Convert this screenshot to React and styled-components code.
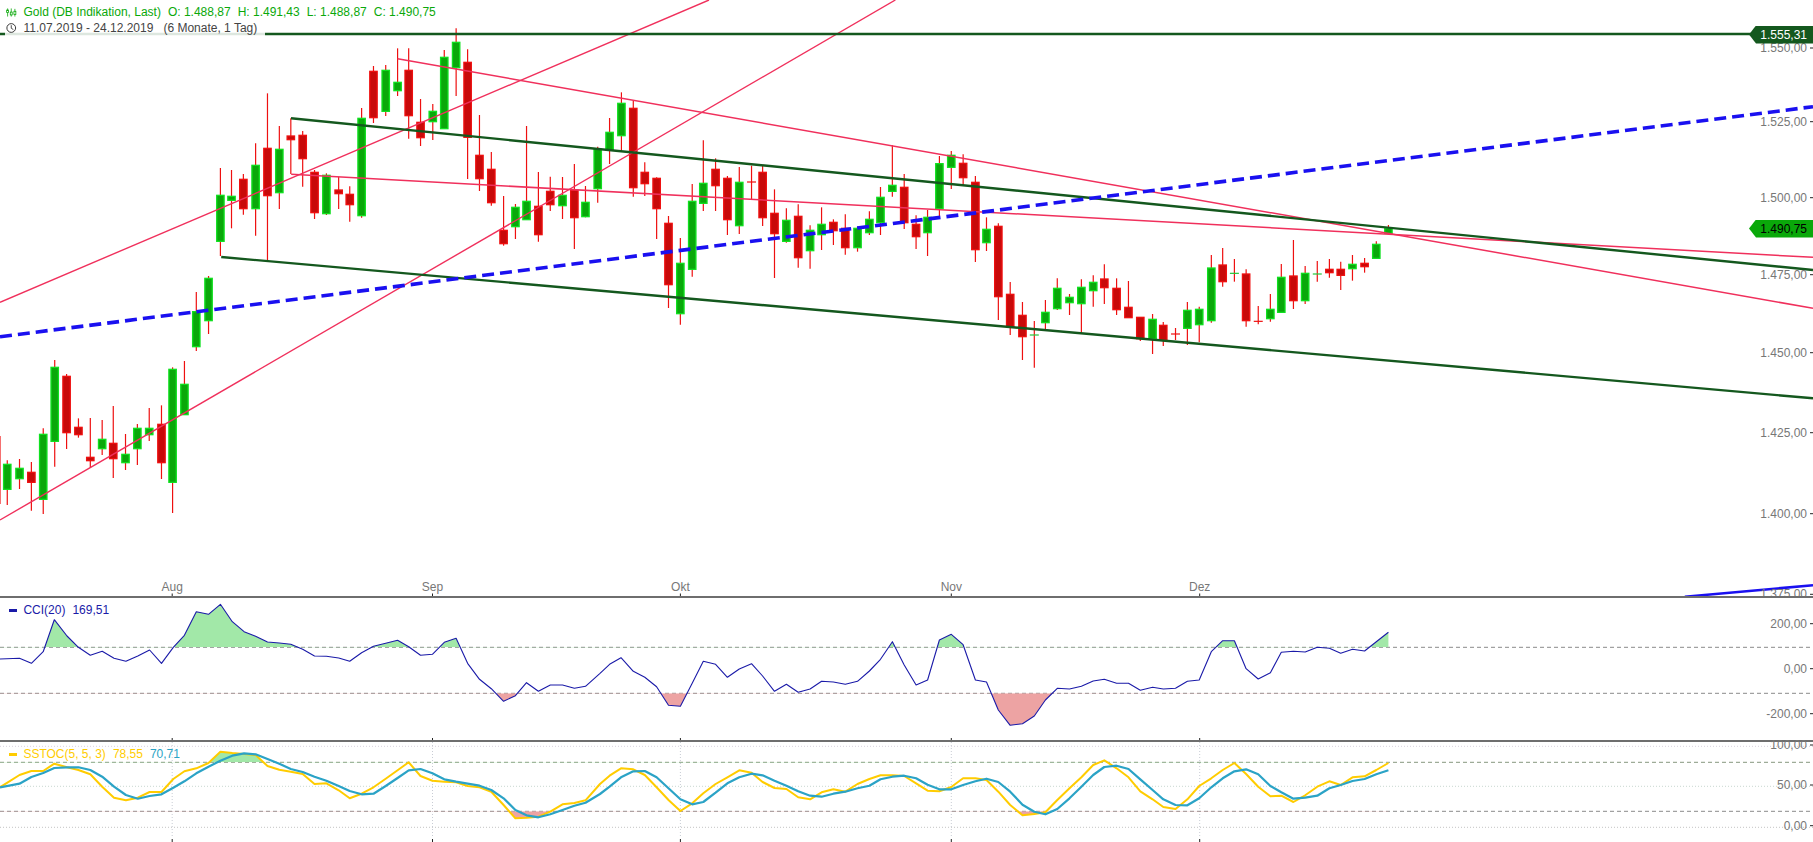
import React from 'react'
import styled, { createGlobalStyle } from 'styled-components'

const Global = createGlobalStyle`
  html, body { margin: 0; padding: 0; background: #fff; }
  body { font-family: "Liberation Sans", Arial, sans-serif; font-size: 12px; }
`

const Colors = {
  up: '#0aa80a',
  upEdge: '#10e020',
  down: '#c80a0a',
  downEdge: '#ee1010',
  channel: '#14581e',
  red: '#f0305c',
  blue: '#1a10f0',
  cci: '#1a1aa8',
  yellow: '#ffcc00',
  teal: '#2ba3c6',
  axis: '#777',
  divider: '#6e6e6e',
}

// measured on 3x crops, so x and y get scaled back per crop
const SX = 2.6133
const SX_RIGHT = 2.558
const px = (ox, oy, sx) => ([x, y]) => [ox + x / sx, oy + y / 3]

const crops = [
  { ox: 0, oy: 280, sx: SX, rows: [
    [0, 468, 672, null, null, 0], [19, 541, 675, 553, 628, 1], [51, 537, 627, 565, 596, 1], [82, 546, 692, 577, 607, 0],
    [113, 445, 702, 463, 658, 1], [143, 240, 560, 262, 484, 1], [174, 282, 507, 289, 458, 0], [205, 415, 473, 442, 464, 0],
    [236, 414, 563, 532, 542, 0], [267, 420, 525, 478, 506, 1], [296, 378, 594, 490, 536, 0], [328, 462, 570, 523, 548, 1],
    [359, 432, 555, 445, 506, 1], [390, 384, 483, 445, 464, 1], [422, 376, 597, 433, 548, 0], [451, 262, 699, 268, 607, 1],
    [482, 243, 405, 313, 404, 1], [513, 36, 213, 95, 200, 1], [545, -12, 162, -5, 122, 1],
  ] },
  { ox: 0, oy: 0, sx: SX, rows: [
    [576, 504, 768, 586, 724, 1], [605, 510, 685, 589, 601, 1], [636, 522, 644, 538, 626, 0], [668, 430, 707, 496, 626, 1],
    [699, 280, 780, 445, 587, 0], [730, 378, 627, 448, 578, 1], [760, 355, 522, 408, 419, 0], [791, 393, 560, 406, 476, 0],
    [822, 510, 657, 517, 638, 0], [853, 520, 645, 526, 641, 1], [885, 530, 627, 570, 581, 0], [914, 559, 665, 583, 614, 0],
    [945, 324, 653, 355, 647, 1], [976, 198, 369, 214, 353, 0], [1008, 195, 348, 211, 334, 1], [1039, 145, 288, 247, 272, 1],
    [1068, 145, 416, 211, 347, 0], [1099, 297, 438, 367, 413, 0], [1131, 312, 420, 334, 365, 1], [1161, 150, 387, 172, 386, 1],
    [1192, 85, 288, 127, 203, 1], [1222, 148, 537, 187, 412, 0], [1253, 345, 573, 466, 536, 0], [1284, 456, 617, 508, 608, 0],
    [1316, 588, 737, 691, 731, 0], [1347, 612, 717, 622, 680, 1], [1376, 378, 660, 604, 659, 1], [1407, 516, 725, 619, 704, 0],
    [1438, 530, 633, 574, 614, 0], [1470, 531, 657, 586, 617, 1], [1501, 492, 747, 571, 653, 0], [1530, 558, 652, 607, 650, 1],
    [1562, 440, 608, 448, 566, 1],
  ] },
  { ox: 600, oy: 0, sx: SX, rows: [
    [25, 354, 492, 397, 450, 1], [56, 277, 454, 310, 407, 1], [87, 302, 590, 325, 563, 0], [117, 487, 588, 517, 551, 0],
    [148, 532, 717, 535, 626, 0], [179, 648, 924, 670, 854, 0], [210, 714, 974, 790, 941, 1], [241, 552, 830, 604, 808, 1],
    [270, 421, 633, 550, 610, 1], [302, 475, 633, 508, 557, 0], [333, 528, 705, 535, 659, 0], [364, 501, 702, 547, 677, 1],
    [396, 497, 598, 546, 548, 0], [425, 497, 678, 517, 653, 0], [456, 568, 834, 640, 701, 0], [487, 625, 728, 661, 724, 1],
    [518, 613, 803, 649, 773, 0], [549, 676, 806, 691, 752, 1], [579, 622, 750, 673, 704, 1], [610, 658, 735, 667, 692, 0],
    [641, 643, 764, 685, 743, 0], [673, 680, 755, 685, 743, 1], [704, 634, 705, 658, 698, 1], [733, 561, 705, 592, 668, 1],
    [764, 436, 590, 556, 574, 1], [795, 522, 687, 562, 668, 0], [826, 646, 747, 673, 710, 0], [856, 630, 768, 652, 698, 1],
    [887, 468, 650, 491, 626, 1], [918, 453, 567, 466, 502, 1], [949, 463, 556, 490, 533, 0], [981, 528, 786, 547, 749, 0],
    [1010, 652, 753, 688, 728, 1], [1041, 670, 960, 679, 890, 0],
  ] },
  { ox: 600, oy: 280, sx: SX, rows: [
    [1072, 6, 165, 43, 140, 0], [1104, 66, 240, 106, 170, 0], [1135, 123, 263, 165, 167, 1], [1164, 60, 150, 97, 128, 1],
    [1195, -5, 90, 25, 86, 1], [1227, 42, 105, 52, 68, 1], [1258, -2, 160, 22, 71, 1], [1289, -14, 80, 7, 32, 1],
    [1318, -47, 72, -3, 23, 0], [1350, -5, 105, 25, 89, 0], [1381, 3, 110, 82, 113, 0], [1412, 112, 183, 112, 176, 0],
    [1444, 102, 222, 118, 176, 1], [1472, 126, 198, 136, 180, 0], [1504, 144, 180, 162, 164, 0], [1535, 66, 195, 91, 145, 1],
    [1566, 80, 187, 88, 134, 1],
  ] },
  { ox: 1200, oy: 0, sx: SX_RIGHT, rows: [
    [29, 765, 968, 804, 962, 1], [58, 744, 860, 795, 845, 0], [88, 777, 845, 820, 822, 1], [118, 808, 980, 822, 962, 0],
    [149, 918, 973, 964, 965, 0], [180, 882, 965, 928, 956, 1], [208, 792, 937, 832, 937, 1], [239, 720, 927, 828, 902, 0],
    [269, 798, 912, 820, 902, 1], [300, 783, 845, 822, 824, 1], [331, 777, 833, 808, 818, 0], [360, 785, 870, 808, 826, 0],
    [390, 765, 842, 793, 806, 1], [421, 774, 818, 790, 800, 0], [451, 724, 775, 733, 775, 1], [482, 675, 700, 685, 700, 1],
  ] },
]

const candles = crops.flatMap(({ ox, oy, sx, rows }) =>
  rows.map(([x, hi, lo, top, bot, up]) => ({
    x: ox + x / sx,
    hi: oy + hi / 3,
    lo: oy + lo / 3,
    top: top === null ? null : oy + top / 3,
    bot: bot === null ? null : oy + bot / 3,
    up: !!up,
  }))
)

const cciPoints = [
  ...[[0,267],[51,265],[82,280],[113,245],[142,149],[175,198],[205,232],[236,256],[267,244],[298,265],[329,274],[360,258],[391,240],[422,280],[453,232],[482,196],[513,125],[545,133],[576,103],[607,155],[638,185],[668,199],[699,216],[730,219],[760,223],[791,238],[822,258],[853,259],[885,264],[914,274],[945,248],[976,229],[1008,220],[1039,211],[1068,230],[1099,256],[1130,253],[1161,217],[1192,205],[1222,280],[1253,328],[1284,356],[1316,394],[1347,377],[1376,338],[1407,364],[1438,345],[1470,345],[1501,355],[1530,349],[1568,310]].map(px(0, 570, SX)),
  ...[[25,283],[55,263],[87,304],[117,322],[148,350],[179,406],[210,409],[241,340],[270,274],[302,283],[333,322],[364,297],[396,281],[425,318],[456,364],[487,343],[518,367],[549,357],[579,334],[610,336],[641,343],[673,334],[704,303],[733,268],[764,215],[795,285],[826,345],[856,330],[887,210],[918,193],[949,224],[981,330],[1010,336],[1041,420],[1072,466],[1104,461],[1135,438],[1164,390],[1195,355],[1227,357],[1258,349],[1289,333],[1318,328],[1350,340],[1381,340],[1412,361],[1444,352],[1472,357],[1504,355],[1535,334],[1566,330]].map(px(600, 570, SX)),
  ...[[29,245],[58,212],[88,212],[118,296],[149,327],[180,308],[208,247],[239,244],[269,246],[300,232],[331,235],[360,250],[390,238],[421,243],[451,215],[482,187]].map(px(1200, 570, SX_RIGHT)),
]

const stocK = [
  ...[[0,652],[51,615],[82,603],[113,603],[142,581],[175,592],[205,600],[236,613],[267,650],[298,683],[329,691],[360,683],[391,666],[422,666],[453,627],[482,604],[513,595],[545,579],[576,545],[607,549],[638,552],[668,555],[699,588],[730,599],[760,605],[791,612],[822,642],[853,640],[885,661],[914,685],[945,671],[976,652],[1008,626],[1039,601],[1068,577],[1099,618],[1130,632],[1161,635],[1192,637],[1222,648],[1253,652],[1284,665],[1316,705],[1347,745],[1376,743],[1407,740],[1438,725],[1470,703],[1501,699],[1530,691],[1568,642]].map(px(0, 570, SX)),
  ...[[25,617],[55,595],[87,598],[117,615],[148,652],[179,690],[210,723],[241,700],[270,670],[302,642],[333,622],[364,601],[396,608],[425,636],[456,654],[487,657],[518,682],[549,688],[579,667],[610,658],[641,665],[673,642],[704,627],[733,616],[764,616],[795,618],[826,640],[856,662],[887,664],[918,651],[949,625],[981,625],[1010,630],[1041,665],[1072,705],[1104,736],[1135,732],[1164,727],[1195,690],[1227,655],[1258,622],[1289,585],[1318,571],[1350,595],[1381,622],[1412,664],[1444,688],[1472,711],[1504,717],[1535,688],[1566,648]].map(px(600, 570, SX)),
  ...[[29,625],[58,600],[88,579],[118,612],[149,650],[180,679],[208,677],[239,696],[269,676],[300,650],[331,634],[360,645],[390,622],[421,619],[451,600],[482,579]].map(px(1200, 570, SX_RIGHT)),
]

const stocD = [
  ...[[0,652],[51,641],[82,621],[113,609],[142,594],[175,592],[205,592],[236,600],[267,620],[298,650],[329,675],[360,686],[391,678],[422,673],[453,653],[482,634],[513,610],[545,590],[576,572],[607,557],[638,550],[668,553],[699,567],[730,581],[760,597],[791,606],[822,620],[853,632],[885,648],[914,663],[945,673],[976,671],[1008,648],[1039,624],[1068,601],[1099,597],[1130,610],[1161,628],[1192,635],[1222,641],[1253,647],[1284,660],[1316,685],[1347,720],[1376,736],[1407,742],[1438,733],[1470,720],[1501,707],[1530,698],[1568,672]].map(px(0, 570, SX)),
  ...[[25,650],[55,622],[87,604],[117,603],[148,622],[179,655],[210,688],[241,703],[270,696],[302,668],[333,640],[364,622],[396,611],[425,616],[456,632],[487,647],[518,664],[549,677],[579,680],[610,671],[641,665],[673,655],[704,647],[733,628],[764,620],[795,617],[826,625],[856,644],[887,658],[918,658],[949,645],[981,634],[1010,626],[1041,636],[1072,665],[1104,704],[1135,725],[1164,733],[1195,717],[1227,685],[1258,650],[1289,615],[1318,591],[1350,587],[1381,597],[1412,628],[1444,660],[1472,688],[1504,705],[1535,706],[1566,685]].map(px(600, 570, SX)),
  ...[[29,652],[58,625],[88,604],[118,598],[149,613],[180,648],[208,667],[239,686],[269,683],[300,677],[331,655],[360,645],[390,633],[421,627],[451,613],[482,601]].map(px(1200, 570, SX_RIGHT)),
]

const trendLines = [
  { d: [0, 520, 895.4, 0], color: Colors.red, w: 1.4 },
  { d: [0, 302.3, 709, 0], color: Colors.red, w: 1.4 },
  { d: [397.6, 58.7, 1813, 308.3], color: Colors.red, w: 1.5 },
  { d: [291.2, 174.3, 1813, 257.3], color: Colors.red, w: 1.5 },
  { d: [0, 34, 1752, 34], color: Colors.channel, w: 2.4 },
  { d: [291, 118.3, 1813, 270], color: Colors.channel, w: 2.4 },
  { d: [221.2, 257, 1813, 398.3], color: Colors.channel, w: 2.4 },
  { d: [1684.8, 596.7, 1813, 585.3], color: Colors.blue, w: 2.6 },
]

const months = [
  { label: 'Aug', x: 172.2 },
  { label: 'Sep', x: 432.5 },
  { label: 'Okt', x: 680.4 },
  { label: 'Nov', x: 951.3 },
  { label: 'Dez', x: 1199.7 },
]

const priceTicks = [
  ['1.550,00', 48], ['1.525,00', 121.7], ['1.500,00', 197.7], ['1.475,00', 274.7],
  ['1.450,00', 352.7], ['1.425,00', 432.7], ['1.400,00', 513.7], ['1.375,00', 594.3],
]
const cciTicks = [['200,00', 623.7], ['0,00', 668.7], ['-200,00', 713.7]]
const stocTicks = [['100,00', 745], ['50,00', 785], ['0,00', 825.7]]

const Page = styled.div`
  width: 1813px;
  height: 842px;
  overflow: hidden;
  display: flex;
  flex-direction: column;
  background: #fff;
`

const Pane = styled.section`
  position: relative;
  flex: 0 0 ${p => p.$height}px;
  overflow: ${p => (p.$last ? 'visible' : 'hidden')};
  box-sizing: border-box;
  border-bottom: ${p => (p.$last ? 'none' : `2px solid ${Colors.divider}`)};
`

const Plot = styled.svg`
  display: block;
  width: 1813px;
  height: 100%;
`

const Legend = styled.div`
  position: absolute;
  left: 5px;
  top: 0;
  width: 260px;
  height: 36px;
  padding-top: 4px;
  box-sizing: border-box;
  background: rgba(255, 255, 255, 0.86);
`

const LegendRow = styled.div`
  display: flex;
  align-items: center;
  height: 16px;
  gap: 7px;
  padding-left: 1px;
  white-space: nowrap;
  color: ${p => p.$color};
`

const IconSlot = styled.span`
  display: flex;
  width: 10.5px;
`

const Indicator = styled.div`
  position: absolute;
  left: 9px;
  top: ${p => p.$top}px;
  display: flex;
  align-items: center;
  height: 16px;
  white-space: nowrap;
  color: ${p => p.$color};
`

const Swatch = styled.span`
  width: 8px;
  height: 3px;
  margin-right: 6.4px;
  background: ${p => p.$color};
`

const Value = styled.span`
  margin-left: ${p => p.$gap}px;
  color: ${p => p.$color || 'inherit'};
`

const AxisLabel = styled.span`
  position: absolute;
  right: 6px;
  top: ${p => p.$y}px;
  transform: translateY(-50%);
  color: ${Colors.axis};
  line-height: 14px;
`

const MonthLabel = styled.span`
  position: absolute;
  left: ${p => p.$x}px;
  top: 586.5px;
  transform: translate(-50%, -50%);
  color: ${Colors.axis};
  line-height: 14px;
`

const PriceTag = styled.div`
  position: absolute;
  right: 0;
  top: ${p => p.$top}px;
  box-sizing: border-box;
  width: 64px;
  height: 18px;
  padding-right: 6px;
  line-height: 18px;
  text-align: right;
  color: ${p => p.$color};
  background: ${p => p.$bg};
  clip-path: polygon(0 50%, 7px 0, 100% 0, 100% 100%, 7px 100%);
`

const Wick = styled.line`
  stroke: ${Colors.downEdge};
  stroke-width: 1.2;
`

const Body = styled.rect`
  fill: ${p => (p.$up ? Colors.up : Colors.down)};
  stroke: ${p => (p.$up ? Colors.upEdge : Colors.downEdge)};
  stroke-width: 1.3;
`

const Doji = styled.line`
  stroke: ${p => (p.$up ? '#22c83a' : Colors.downEdge)};
  stroke-width: 1.2;
`

const Trend = styled.line`
  stroke: ${p => p.$color};
  stroke-width: ${p => p.$w};
`

const DashedTrend = styled.line`
  stroke: ${Colors.blue};
  stroke-width: 3.6;
  stroke-dasharray: 12 6;
`

const Curve = styled.polyline`
  fill: none;
  stroke: ${p => p.$color};
  stroke-width: ${p => p.$w};
  stroke-linejoin: round;
`

const Level = styled.line`
  stroke: ${p => p.$color || '#8a8a8a'};
  stroke-width: 1;
  stroke-dasharray: ${p => p.$dash || '4 3'};
`

const Tick = styled.line`
  stroke: #222;
  stroke-width: 1;
`

const Shade = styled.polygon`
  fill: ${p => (p.$up ? '#a2e8a8' : '#eda3a3')};
`

const toPoints = pts => pts.map(([x, y]) => `${x.toFixed(1)},${y.toFixed(1)}`).join(' ')

function Candle({ c }) {
  const isDoji = c.top !== null && c.bot - c.top < 2
  return (
    <g>
      <Wick x1={c.x} x2={c.x} y1={c.hi} y2={c.lo} />
      {isDoji && <Doji $up={c.up} x1={c.x - 4.5} x2={c.x + 4.5} y1={c.top} y2={c.top} />}
      {!isDoji && c.top !== null && <Body $up={c.up} x={c.x - 3.7} y={c.top} width={7.4} height={c.bot - c.top} />}
    </g>
  )
}

// area between a curve and a level, only on the outer side of the level
function LevelShade({ id, pts, level, up, top, bottom }) {
  const first = pts[0]
  const last = pts[pts.length - 1]
  const poly = [[first[0], level], ...pts, [last[0], level]]
  return (
    <>
      <clipPath id={id}>
        <rect x="0" y={up ? top : level} width="1813" height={up ? level - top : bottom - level} />
      </clipPath>
      <g clipPath={`url(#${id})`}>
        <Shade $up={up} points={toPoints(poly)} />
      </g>
    </>
  )
}

function BarsIcon() {
  return (
    <svg width="13" height="11" viewBox="0 0 13 11">
      <g stroke="#0aa80a" strokeWidth="1" fill="#fff">
        <path d="M2 0.5V10.5M6.5 0.5V10.5M11 1V10.5" />
        <rect x="0.8" y="2.5" width="2.4" height="3" />
        <rect x="5.3" y="5" width="2.4" height="3.5" />
        <rect x="9.8" y="4" width="2.4" height="4" />
      </g>
    </svg>
  )
}

function ClockIcon() {
  return (
    <svg width="12" height="12" viewBox="0 0 12 12">
      <circle cx="6" cy="6" r="5" fill="none" stroke="#333" strokeWidth="1.1" />
      <path d="M6 2.8V6.3L8.4 7.8" fill="none" stroke="#333" strokeWidth="1" />
    </svg>
  )
}

export default function App() {
  return (
    <Page>
      <Global />
      <Pane $height={598}>
        <Plot viewBox="0 0 1813 596">
          {candles.map((c, i) => <Candle key={i} c={c} />)}
          {trendLines.map((l, i) => (
            <Trend key={i} $color={l.color} $w={l.w} x1={l.d[0]} y1={l.d[1]} x2={l.d[2]} y2={l.d[3]} />
          ))}
          <DashedTrend x1="0" y1="336.7" x2="1813" y2="106.7" />
          {priceTicks.map(([t, y]) => <Tick key={t} x1="1810" x2="1813" y1={y} y2={y} />)}
          {months.map(m => <Tick key={m.label} x1={m.x} x2={m.x} y1="593.5" y2="596" />)}
        </Plot>
        <Legend>
          <LegendRow $color={Colors.up}>
            <IconSlot><BarsIcon /></IconSlot>
            <span>Gold (DB Indikation, Last)</span>
            <span>O: 1.488,87</span>
            <span>H: 1.491,43</span>
            <span>L: 1.488,87</span>
            <span>C: 1.490,75</span>
          </LegendRow>
          <LegendRow $color="#444">
            <IconSlot><ClockIcon /></IconSlot>
            <span>11.07.2019 - 24.12.2019</span>
            <Value $gap={3}>(6 Monate, 1 Tag)</Value>
          </LegendRow>
        </Legend>
        {priceTicks.map(([t, y]) => <AxisLabel key={t} $y={y}>{t}</AxisLabel>)}
        {months.map(m => <MonthLabel key={m.label} $x={m.x}>{m.label}</MonthLabel>)}
        <PriceTag $top={25.5} $bg={Colors.channel} $color="#fff">1.555,31</PriceTag>
        <PriceTag $top={219.5} $bg={Colors.up} $color="#000">1.490,75</PriceTag>
      </Pane>

      <Pane $height={144}>
        <Plot viewBox="0 598 1813 142">
          <Level x1="0" x2="1813" y1="647.3" y2="647.3" />
          <Level x1="0" x2="1813" y1="693.3" y2="693.3" />
          <LevelShade id="cci-up" pts={cciPoints} level={647.3} up top={598} bottom={740} />
          <LevelShade id="cci-down" pts={cciPoints} level={693.3} top={598} bottom={740} />
          <Curve $color={Colors.cci} $w={1.1} points={toPoints(cciPoints)} />
          {cciTicks.map(([t, y]) => <Tick key={t} x1="1810" x2="1813" y1={y} y2={y} />)}
          {months.map(m => <Tick key={m.label} x1={m.x} x2={m.x} y1="738" y2="740" />)}
        </Plot>
        <Indicator $color={Colors.cci} $top={4}>
          <Swatch $color={Colors.cci} />
          CCI(20)
          <Value $gap={7}>169,51</Value>
        </Indicator>
        {cciTicks.map(([t, y]) => <AxisLabel key={t} $y={y - 598}>{t}</AxisLabel>)}
      </Pane>

      <Pane $height={100} $last>
        <Plot viewBox="0 742 1813 100">
          <Level $color="#d8d0dc" $dash="1 2" x1="0" x2="1813" y1="746.3" y2="746.3" />
          <Level $color="#c8d8d0" $dash="1 2" x1="0" x2="1813" y1="786.3" y2="786.3" />
          <Level $color="#c4c4c4" $dash="1 2" x1="0" x2="1813" y1="827.3" y2="827.3" />
          {months.map(m => <Level key={m.label} $color="#c8ccd4" $dash="1 2" x1={m.x} x2={m.x} y1="742" y2="838" />)}
          <Level $color="#86987f" x1="0" x2="1813" y1="762.3" y2="762.3" />
          <Level $color="#8a8a8a" x1="0" x2="1813" y1="811.3" y2="811.3" />
          <LevelShade id="stoc-up" pts={stocK} level={762.3} up top={742} bottom={842} />
          <LevelShade id="stoc-down" pts={stocK} level={811.3} top={742} bottom={842} />
          <Curve $color={Colors.yellow} $w={2} points={toPoints(stocK)} />
          <Curve $color={Colors.teal} $w={2.2} points={toPoints(stocD)} />
          {stocTicks.map(([t, y]) => <Tick key={t} x1="1810" x2="1813" y1={y} y2={y} />)}
          {months.map(m => <Tick key={m.label} x1={m.x} x2={m.x} y1="839" y2="842" />)}
        </Plot>
        <Indicator $color={Colors.yellow} $top={4}>
          <Swatch $color={Colors.yellow} />
          SSTOC(5, 5, 3)
          <Value $gap={7}>78,55</Value>
          <Value $gap={7} $color={Colors.teal}>70,71</Value>
        </Indicator>
        {stocTicks.map(([t, y]) => <AxisLabel key={t} $y={y - 742}>{t}</AxisLabel>)}
      </Pane>
    </Page>
  )
}
